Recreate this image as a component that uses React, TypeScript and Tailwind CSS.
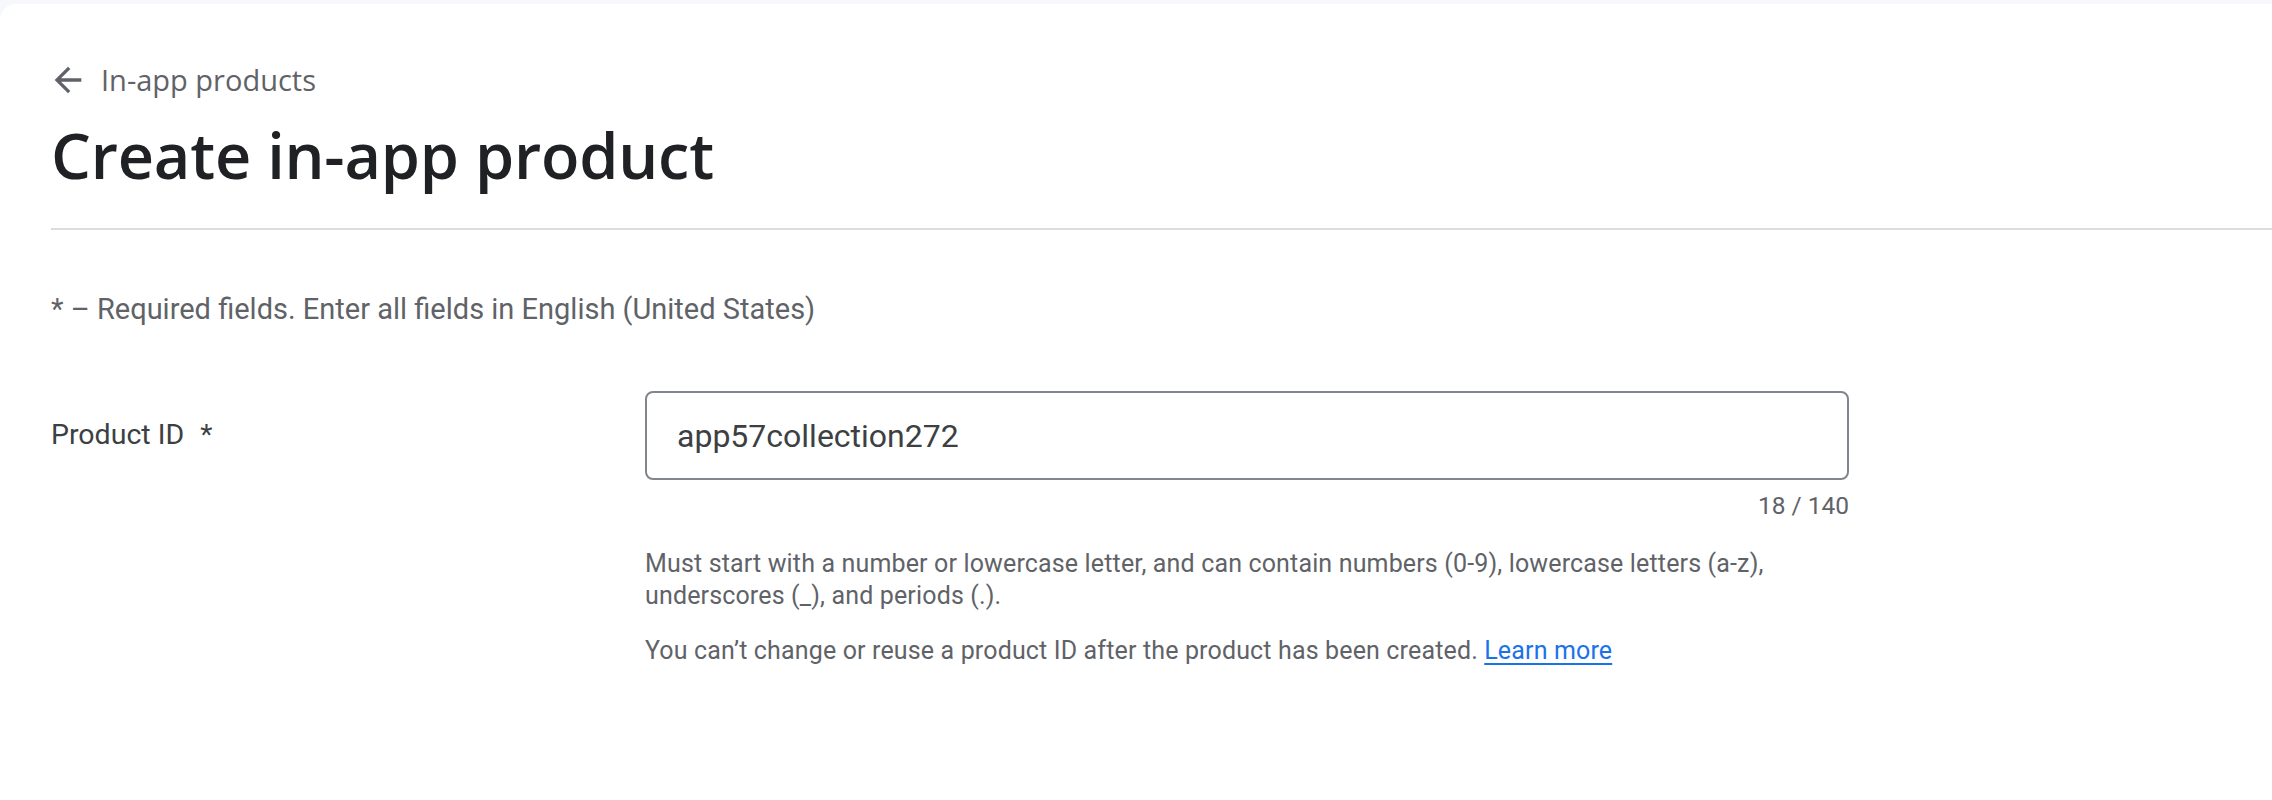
import React from "react";

export default function App() {
  return (
    <div className="min-h-screen bg-[#f6f8fb] pt-[4px]" style={{ fontFamily: "Roboto, 'Liberation Sans', sans-serif" }}>
      <div className="bg-white rounded-tl-[16px] min-h-[796px] pl-[51px]">
        <div className="pt-[56px] flex items-center h-[96px]">
          <svg width="40" height="40" viewBox="0 0 24 24" className="ml-[-3px] text-[#5f6368]" fill="currentColor">
            <path d="M20 11H7.83l5.59-5.59L12 4l-8 8 8 8 1.41-1.41L7.83 13H20v-2z" />
          </svg>
          <span className="ml-[13px] text-[29px] leading-[40px] text-[#5f6368]" style={{ fontFamily: "'Open Sans', sans-serif" }}>
            In-app products
          </span>
        </div>
        <h1 className="mt-[19px] h-[72px] text-[63px] leading-[72px] text-[#202124] font-semibold tracking-[-0.2px]" style={{ fontFamily: "'Open Sans', sans-serif" }}>
          Create in-app product
        </h1>
        <div className="mt-[37px] h-[2px] bg-[#dadce0]" />
        <p className="mt-[59px] text-[29px] leading-[40px] text-[#5f6368]">
          * – Required fields. Enter all fields in English (United States)
        </p>
        <div className="mt-[62px] flex">
          <div className="w-[594px] h-[89px] flex items-center text-[28.5px] text-[#3c4043]">
            <span>Product ID</span>
            <span className="ml-[16px]">*</span>
          </div>
          <div className="w-[1204px] flex flex-col">
            <div className="h-[89px] border-2 border-[#80868b] rounded-[8px] flex items-center pl-[30px]">
              <input
                readOnly
                value="app57collection272"
                className="w-full outline-none bg-transparent text-[32px] text-[#3c4043]"
                style={{ fontFamily: "Roboto, sans-serif" }}
              />
            </div>
            <div className="mt-[10px] text-right text-[24.5px] leading-[32px] text-[#5f6368]">18 / 140</div>
            <p className="mt-[26px] text-[25px] leading-[32px] tracking-[0.15px] text-[#5f6368]">
              Must start with a number or lowercase letter, and can contain numbers (0-9), lowercase letters (a-z),
              <br />
              underscores (_), and periods (.).
            </p>
            <p className="mt-[23px] text-[25px] leading-[32px] tracking-[0.15px] text-[#5f6368]">
              You can’t change or reuse a product ID after the product has been created.{" "}
              <a href="#" className="text-[#1a73e8] underline decoration-2 underline-offset-[4px]">Learn more</a>
            </p>
          </div>
        </div>
      </div>
    </div>
  );
}
